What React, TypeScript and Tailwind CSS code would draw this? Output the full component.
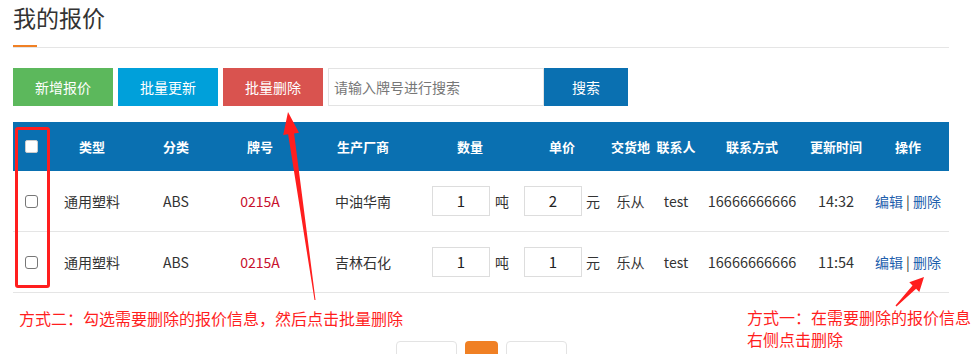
const cols = "grid grid-cols-[37px_84px_84px_84px_122px_92px_92px_45px_46px_106px_62px_82px]";

const rows = [
    { maker: "中油华南", qty: "1", price: "2", time: "14:32" },
    { maker: "吉林石化", qty: "1", price: "1", time: "11:54" },
];

const headers = ["类型", "分类", "牌号", "生产厂商", "数量", "单价", "交货地", "联系人", "联系方式", "更新时间", "操作"];

export default function App() {
    return (
        <div
            className="relative w-[978px] h-[354px] overflow-hidden bg-white text-[#333]"
            style={{ fontFamily: '"Noto Sans CJK SC", "Noto Sans", sans-serif' }}>
            <div className="pl-[13px] w-[949px]">
                <h1 className="pt-[2px] text-[23px] leading-[30px] font-normal text-[#333]">我的报价</h1>
                <div className="mt-[13px] border-b border-[#e5e5e5] h-[3px]">
                    <div className="w-[24px] h-[2px] bg-[#f08024]"></div>
                </div>

                <div className="flex items-center mt-[20px] h-[38px] text-[14px]">
                    <button className="w-[100px] h-[38px] bg-[#5cb85c] text-white">新增报价</button>
                    <button className="ml-[5px] w-[100px] h-[38px] bg-[#00a0da] text-white">批量更新</button>
                    <button className="ml-[5px] w-[100px] h-[38px] bg-[#d9534f] text-white">批量删除</button>
                    <div className="ml-[5px] w-[216px] h-[38px] border border-[#e3e3e3] flex items-center px-[5px] text-[#777]">
                        请输入牌号进行搜索
                    </div>
                    <button className="w-[84px] h-[38px] bg-[#0a70b1] text-white">搜索</button>
                </div>

                <div className="mt-[16px] w-[936px]">
                    <div className={`${cols} h-[49px] bg-[#0a70b1] text-white text-[13px] font-bold items-center text-center`}>
                        <div className="flex justify-center">
                            <div className="w-[13px] h-[13px] bg-white rounded-[2px] border border-[#ccc]"></div>
                        </div>
                        {headers.map((h) => (
                            <div key={h}>{h}</div>
                        ))}
                    </div>
                    {rows.map((r) => (
                        <div key={r.maker} className={`${cols} h-[61px] border-b border-[#e5e5e5] items-center text-center text-[14px]`}>
                            <div className="flex justify-center">
                                <div className="w-[13px] h-[13px] bg-white rounded-[3px] border border-[#777]"></div>
                            </div>
                            <div>通用塑料</div>
                            <div>ABS</div>
                            <div className="text-[#c8102e]">0215A</div>
                            <div>{r.maker}</div>
                            <div className="flex items-center pl-[8px]">
                                <div className="w-[58px] h-[30px] border border-[#ddd] flex items-center justify-center text-[15px] text-[#222]">{r.qty}</div>
                                <span className="ml-[5px]">吨</span>
                            </div>
                            <div className="flex items-center pl-[8px]">
                                <div className="w-[58px] h-[30px] border border-[#ddd] flex items-center justify-center text-[15px] text-[#222]">{r.price}</div>
                                <span className="ml-[4px]">元</span>
                            </div>
                            <div>乐从</div>
                            <div>test</div>
                            <div className="text-[14.5px]">16666666666</div>
                            <div className="text-[14.5px]">{r.time}</div>
                            <div>
                                <span className="text-[#1f5fae]">编辑</span> | <span className="text-[#1f5fae]">删除</span>
                            </div>
                        </div>
                    ))}
                </div>

                <div className="mt-[48px] flex justify-center gap-[8px] w-[936px]">
                    <div className="w-[61px] h-[30px] border border-[#e3e3e3] rounded-[4px]"></div>
                    <div className="w-[33px] h-[30px] bg-[#f08024] rounded-[4px]"></div>
                    <div className="w-[61px] h-[30px] border border-[#e3e3e3] rounded-[4px]"></div>
                </div>
            </div>

            {/* annotations */}
            <div className="absolute left-[15px] top-[127px] w-[35px] h-[161px] border-[3px] border-[#ff1e1e] rounded-[3px]"></div>
            <svg className="absolute inset-0 pointer-events-none" width="978" height="354">
                <polygon
                    fill="#ff1e1e"
                    points="288,112 299,132.7 294.1,133.4 315.5,300 314.5,300 288.1,134.2 283.2,134.9"
                />
                <polygon
                    fill="#ff1e1e"
                    points="924,277 919.3,292 916.1,288.8 896.5,306.5 895.5,305.5 912.5,285.4 909.3,282.2"
                />
            </svg>
            <div className="absolute left-[19px] top-[308px] text-[16px] leading-[20px] text-[#ff1e1e]">
                方式二：勾选需要删除的报价信息，然后点击批量删除
            </div>
            <div className="absolute left-[747px] top-[306px] text-[16px] leading-[22px] text-[#ff1e1e]">
                <div>方式一：在需要删除的报价信息</div>
                <div>右侧点击删除</div>
            </div>
        </div>
    );
}
